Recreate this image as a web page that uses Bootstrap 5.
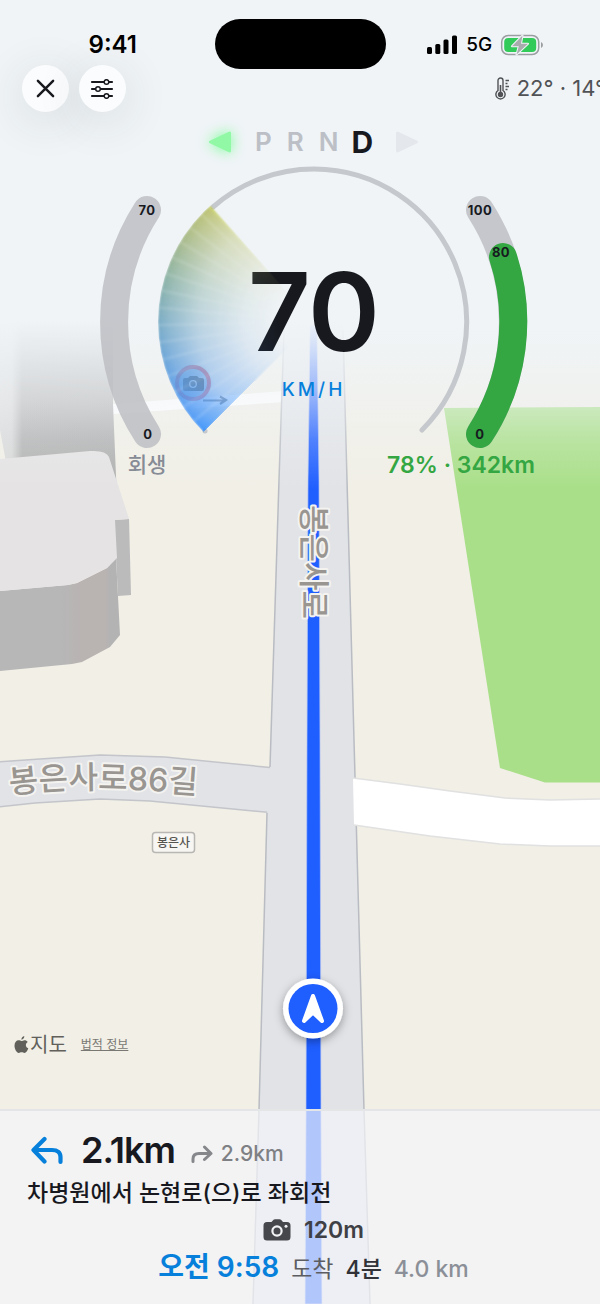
<!DOCTYPE html>
<html lang="ko">
<head>
<meta charset="utf-8">
<meta name="viewport" content="width=device-width, initial-scale=1">
<title>주행 내비게이션</title>
<link href="https://cdn.jsdelivr.net/npm/bootstrap@5.3.0/dist/css/bootstrap.min.css" rel="stylesheet">
<style>
  :root { --ink: #17191f; --accent: #0780dc; --charge: #34a642; }
  body { font-family: Inter, "Noto Sans CJK KR", sans-serif; color: var(--ink); background: #f1efe6; overflow-x: hidden; line-height: 1.2; }
  .screen { min-height: 100vh; overflow: hidden; isolation: isolate; }
  .map-layer { inset: 0; z-index: -1; width: 100%; height: 100%; }
  /* the driving overlay is a little wider than the window */
  .overlay { margin-right: -27px; }

  .status-bar { height: 65px; padding-top: 19px; color: #000; }
  .status-side { flex: 1 1 0; height: 52px; }
  .island { width: 171px; height: 50px; border-radius: 25px; background: #000; }
  .clock { font-size: 24px; font-weight: 600; margin-left: 11px; }
  .signal { margin-right: 14px; }
  .net { font-size: 19px; font-weight: 500; }

  .tools { padding: 0 22px; gap: 10px; }
  .tool-btn { width: 47px; height: 47px; border: 0; border-radius: 50%; background: #fbfcfd; color: var(--ink); box-shadow: 0 8px 44px 6px rgba(40, 50, 60, .09); }
  .tool-btn:hover { background: #fff; }
  .weather { font-size: 22px; font-weight: 400; color: #505256; gap: 7px; }

  .gears { height: 48px; padding-top: 12px; gap: 15px; font-size: 26px; font-weight: 600; color: #bcc0c6; line-height: 36px; }
  .gears .current { font-size: 30px; font-weight: 700; color: var(--ink); margin-left: -2px; }
  .blink-left { margin-right: 8px; filter: drop-shadow(0 0 7px #6fff8e); }
  .blink-right { margin-left: 7px; }

  .cluster { width: 460px; }
  .dial { display: grid; }
  .dial > * { grid-area: 1 / 1; }
  .dial svg text { font-weight: 700; font-size: 13px; letter-spacing: .5px; fill: var(--ink); text-anchor: middle; }
  .fan { width: 312px; height: 312px; margin-top: 6px; justify-self: center; border-radius: 50%; filter: blur(1px);
    background:
      repeating-conic-gradient(from 225deg, transparent 0deg 4.6deg, rgba(255,255,255,.14) 5.4deg 5.6deg, transparent 6.4deg),
      conic-gradient(from 225deg, #2186ff 0deg, #4090f4 10deg, #4f95dc 26deg, #659fbe 44deg, #7ba796 62deg, #9cb075 78deg, #b4ba5c 92deg, #c4cc50 93deg, transparent 94deg);
    -webkit-mask: conic-gradient(from 225deg, #000 93deg, transparent 94deg), radial-gradient(circle closest-side, transparent 22%, rgba(0,0,0,.12) 45%, rgba(0,0,0,.38) 74%, rgba(0,0,0,.7) 93%, rgba(0,0,0,.85) 100%);
    -webkit-mask-composite: source-in;
    mask-composite: intersect; }
  .readout { padding-top: 85px; }
  .speed { font-size: 109px; font-weight: 600; line-height: 132px; letter-spacing: -1px; }
  .unit { font-size: 19px; font-weight: 500; letter-spacing: 3px; color: var(--accent); line-height: 26px; }
  .gauge-foot { margin-top: -28px; line-height: 30px; }
  .regen { width: 127px; font-size: 21px; font-weight: 500; color: #868b95; }
  .range { width: 165px; font-size: 23px; font-weight: 600; color: var(--charge); }

  .attribution { padding: 0 14px 50px; color: #61605b; }
  .maps-name { font-size: 20px; line-height: 28px; margin-left: 1px; }
  .legal { font-size: 12px; color: #797873; margin-left: 14px; }

  .route-panel { background: rgba(244, 245, 249, .69); border-top: 2px solid #e3e5e6; padding: 17px 27px 15px; }
  .next-dist { font-size: 36px; font-weight: 600; line-height: 44px; letter-spacing: -1px; margin-left: 14px; }
  .then-dist { font-size: 21px; font-weight: 500; color: #7e8084; }
  .instruction { font-size: 23px; font-weight: 500; line-height: 34px; margin-top: 4px; white-space: nowrap; }
  .camera-row { font-size: 23px; font-weight: 600; color: #3e4045; line-height: 32px; gap: 13px; margin-top: 4px; }
  .eta-row { font-size: 23px; color: #5b5d62; line-height: 40px; gap: 12px; margin-top: 1px; }
  .eta { font-size: 28px; font-weight: 600; color: var(--accent); }
  .trip-time { color: #303238; }
  .trip-dist { color: #8b8f97; }
  .road-name { fill: #999590; stroke: #f4f3f0; stroke-width: 4px; stroke-linejoin: round; paint-order: stroke; font-weight: 500; }
</style>
</head>
<body>
<div class="screen position-relative d-flex flex-column">

  <svg class="map-layer position-absolute" viewBox="0 0 600 1304" preserveAspectRatio="xMinYMin slice" role="img" aria-label="지도">
    <defs>
      <linearGradient id="haze" gradientUnits="userSpaceOnUse" x1="0" y1="320" x2="0" y2="490">
        <stop offset="0" stop-color="#f0f4f7"/><stop offset=".18" stop-color="#f0f4f7" stop-opacity=".84"/>
        <stop offset=".47" stop-color="#f0f4f7" stop-opacity=".54"/><stop offset=".7" stop-color="#f0f4f7" stop-opacity=".24"/>
        <stop offset="1" stop-color="#f0f4f7" stop-opacity="0"/>
      </linearGradient>
      <linearGradient id="wall" x1="0" x2="1" y1="0" y2="0">
        <stop offset=".5" stop-color="#b7b7b8"/><stop offset=".68" stop-color="#b9b3b2"/><stop offset=".88" stop-color="#b9b3b2"/><stop offset=".92" stop-color="#b3b3b4"/>
      </linearGradient>
      <linearGradient id="tower" x1="0" x2="1" y1="0" y2="0">
        <stop offset="0" stop-color="#dadada"/><stop offset=".1" stop-color="#d8d8d8"/><stop offset=".19" stop-color="#b2b2b2"/><stop offset="1" stop-color="#afafaf"/>
      </linearGradient>
      <filter id="puckShadow" x="-50%" y="-50%" width="200%" height="200%"><feDropShadow dx="0" dy="3" stdDeviation="5" flood-opacity=".35"/></filter>
      <path id="sideStreet" d="M10 794 Q58 788 104 789 T210 795"/>
    </defs>
    <rect width="600" height="1304" fill="#f1efe6"/>
    <path d="M444 408 600 407V782.500H545L500 768Z" fill="#a9df88"/>
    <path d="M113 404 284 391V402L113 414Z" fill="#fff"/>
    <path d="M0 300H113V404L117 500H0Z" fill="url(#tower)"/>
    <path d="M0 430 6 462H0Z" fill="#f1efe6"/>
    <path d="M-3 762 40 759 100 755 165 757 275 768V813L150 801 100 799 35 803-3 807Z" fill="#e1e3e7" stroke="#c3c5ca" stroke-width="1.500"/>
    <path d="M285 300 283 360 279 480 270 767V790L267 814 259 1110 253 1304H370L364 1110 354 740 347 480 343 330V300Z" fill="#e1e3e7"/>
    <path d="M285 300 283 360 279 480 270 767M267 813 259 1110 253 1304M370 1304 364 1110 354 740 347 480 343 330" fill="none" stroke="#b9bcc2" stroke-width="1.500"/>
    <path d="M353 778 400 784 450 791 505 798 550 800 602 799V846L550 846 500 844 430 836 354 825Z" fill="#fff"/>
    <path d="M353 778 400 784 450 791 505 798 550 800 602 799M602 846 550 846 500 844 430 836 354 825" fill="none" stroke="#e0e1e0" stroke-width="1.500"/>
    <path d="M0 591 68 585 77 583 107 568 116 558 120 635 110 647 82 662 72 664 0 671Z" fill="url(#wall)"/>
    <path d="M114 520 129 519 131 595 118 596Z" fill="#bbbbbc"/>
    <path d="M0 459 90 451Q106 450 109 457L129 519 115 520 117 558 107 568 77 583 68 585 0 591Z" fill="#e5e3e4"/>
    <path d="M310 325H317L319 480 320 740 321 1110 322 1304H305L306 1110 307 740 308 480Z" fill="#1f5eff" stroke="#b6c6f2" stroke-width=".7"/>
    <rect width="600" height="490" fill="url(#haze)"/>

    <text class="road-name" font-size="31" text-anchor="middle" transform="translate(303 562) rotate(90)">봉은사로</text>
    <text class="road-name" font-size="32"><textPath href="#sideStreet">봉은사로86길</textPath></text>
    <rect x="152.500" y="832.500" width="42" height="20" rx="3" fill="#f7f6f3" stroke="#b8b7b3" stroke-width="1.500"/>
    <text x="173.500" y="847" font-size="12" font-weight="500" text-anchor="middle" fill="#55544f">봉은사</text>

    <g filter="url(#puckShadow)"><circle cx="313" cy="1008.500" r="30" fill="#fff"/></g>
    <circle cx="313" cy="1008.500" r="24.500" fill="#1f5eff"/>
    <path d="M313 996 322 1021 313 1012.500 304 1021Z" fill="#fff" stroke="#fff" stroke-width="4" stroke-linejoin="round"/>
  </svg>

  <header class="status-bar d-flex align-items-start">
    <div class="status-side d-flex justify-content-center align-items-center"><span class="clock">9:41</span></div>
    <div class="island flex-shrink-0"></div>
    <div class="status-side d-flex justify-content-center align-items-center">
      <svg class="me-2" width="31" height="20" viewBox="0 0 31 20" aria-hidden="true"><rect y="12" width="5" height="7" rx="1.500"/><rect x="8.300" y="9" width="5" height="10" rx="1.500"/><rect x="16.500" y="4.500" width="5" height="14.500" rx="1.500"/><rect x="25" y=".5" width="5" height="18.500" rx="1.500"/></svg>
      <span class="net">5G</span>
      <svg class="signal ms-2" width="44" height="22" viewBox="0 0 44 22" aria-hidden="true">
        <rect x="1.700" y="1.500" width="37" height="19" rx="6.500" fill="none" stroke="#9b9ea1" stroke-width="1.500"/>
        <rect x="4.200" y="4" width="32" height="14" rx="4" fill="#32cb59"/>
        <path d="M41 8v6q2-1 2-3t-2-3" fill="#9b9ea1"/>
        <path d="M22.500 1.500 12 12.200h6.800L16.500 20.500 28 9.800h-7z" fill="#a9acad" stroke="#f0f4f8" stroke-width="2" paint-order="stroke" stroke-linejoin="round"/>
      </svg>
    </div>
  </header>

  <div class="overlay d-flex flex-column flex-grow-1">
    <nav class="tools d-flex align-items-center" aria-label="도구">
      <button type="button" class="tool-btn d-flex align-items-center justify-content-center p-0" aria-label="닫기">
        <svg width="19" height="19" viewBox="0 0 20 20" stroke="currentColor" stroke-width="2.600" stroke-linecap="round"><path d="M2 2 18 18M18 2 2 18"/></svg>
      </button>
      <button type="button" class="tool-btn d-flex align-items-center justify-content-center p-0" aria-label="설정">
        <svg width="25" height="20" viewBox="0 0 25 20" fill="#fbfcfd" stroke="currentColor" stroke-linecap="round"><path stroke-width="2.200" d="M2 3H22M2 10H22M2 17H22"/><g stroke-width="1.500"><circle cx="16.500" cy="3" r="2.300"/><circle cx="8" cy="10" r="2.300"/><circle cx="16.500" cy="17" r="2.300"/></g></svg>
      </button>
      <div class="weather d-flex align-items-center ms-auto">
        <svg width="15" height="23" viewBox="0 0 15 23" fill="none" stroke="currentColor" stroke-width="1.400"><path d="M3 13.500V3.500a2.500 2.500 0 0 1 5 0V13.500a4.600 4.600 0 1 1-5 0Z"/><circle cx="5.500" cy="17.500" r="2" fill="currentColor"/><path stroke-width="1.600" d="M5.500 8V17"/><path d="M10.500 3.500H14M10.500 6.500H12.500M10.500 9.500H14M10.500 12.500H12.500"/></svg>
        <span>22° · 14°</span>
      </div>
    </nav>

    <div class="gears d-flex justify-content-center align-items-center">
      <svg class="blink-left" width="24" height="24" viewBox="0 0 24 24" aria-label="좌측 방향지시등"><path d="M2.500 12 21.500 3V21Z" fill="#91f9a6" stroke="#91f9a6" stroke-width="3" stroke-linejoin="round"/></svg>
      <span>P</span><span>R</span><span>N</span><span class="current">D</span>
      <svg class="blink-right" width="24" height="24" viewBox="0 0 24 24" aria-label="우측 방향지시등"><path d="M21.500 12 2.500 3V21Z" fill="#e4e7ec" stroke="#e4e7ec" stroke-width="3" stroke-linejoin="round"/></svg>
    </div>

    <section class="cluster mx-auto" aria-label="계기판">
      <div class="dial">
        <svg class="w-100" viewBox="84 160 460 300" aria-hidden="true">
          <g fill="none" stroke-linecap="round">
            <path d="M213 207A153 153 0 0 1 314 169A153 153 0 0 1 422 430M205 431h.1" stroke="#c5c8cc" stroke-width="5"/>
            <g stroke="#babcc0" stroke-opacity=".8" stroke-width="28">
              <path d="M147 210A207 207 0 0 0 147 434"/>
              <path d="M480 210A207 207 0 0 1 480 434"/>
            </g>
            <path d="M503 257A207 207 0 0 1 480 434" stroke="#34a642" stroke-width="28"/>
          </g>
          <g opacity=".5">
            <circle cx="193" cy="383" r="19" fill="#dbe2ea" opacity=".6"/>
            <circle cx="193" cy="383" r="16" fill="#a9c9ec" stroke="#e0465f" stroke-width="4"/>
            <path d="M185 378h3l2-2h7l2 2h3a2 2 0 0 1 2 2v9a2 2 0 0 1-2 2h-17a2 2 0 0 1-2-2v-9a2 2 0 0 1 2-2Z" fill="#27303c"/>
            <circle cx="193" cy="384" r="3.300" fill="none" stroke="#dce6f0" stroke-width="1.300"/>
            <path d="M203 400.500H225M220 396.500 226 400 220 404" fill="none" stroke="#5a6472" stroke-width="2.200"/>
          </g>
        </svg>
        <div class="fan"></div>
        <svg class="w-100" viewBox="84 160 460 300">
          <text x="147" y="215">70</text><text x="148" y="439">0</text>
          <text x="480" y="215">100</text><text x="501" y="257">80</text><text x="480" y="439">0</text>
        </svg>
        <div class="readout text-center">
          <div class="speed">70</div>
          <div class="unit">KM/H</div>
        </div>
      </div>
      <div class="gauge-foot d-flex justify-content-between text-center">
        <span class="regen">회생</span>
        <span class="range text-nowrap">78% · 342km</span>
      </div>
    </section>

    <div class="attribution d-flex align-items-center mt-auto">
      <svg width="15" height="18" viewBox="0 0 14 18" fill="currentColor" aria-label="Apple"><path d="M9.800 0C10 1.800 8.600 3.600 6.900 3.700 6.700 2 8.200.3 9.800 0ZM7 5C7.800 5 8.600 4.200 10 4.200c1.300 0 2.500.7 3.200 1.700-2.700 1.600-2.300 5.300.6 6.400C13 14.500 11.600 17 10 17c-1.100 0-1.600-.7-2.900-.7-1.300 0-1.800.7-2.900.7C2.300 17 0 13.200 0 9.800 0 6.200 2 4.300 4 4.300 5.300 4.300 6.300 5 7 5Z"/></svg>
      <span class="maps-name">지도</span>
      <a class="legal" href="#legal">법적 정보</a>
    </div>

    <footer class="route-panel">
      <div class="d-flex align-items-center">
        <svg class="mx-1" width="32" height="30" viewBox="0 0 32 30" fill="none" stroke="#0780dc" stroke-width="4.200" stroke-linecap="round" stroke-linejoin="round"><path d="M13.500 4 2.500 15 13.500 26.500M3 15H21Q29.500 15 29.500 22V27"/></svg>
        <span class="next-dist">2.1km</span>
        <svg class="ms-3 mt-2" width="22" height="20" viewBox="0 0 22 20" fill="none" stroke="#85878b" stroke-width="3" stroke-linecap="round" stroke-linejoin="round"><path d="M13.500 3 20 9.500 13.500 15.500M19.500 9.500H8Q2 9.500 2 15V17.500"/></svg>
        <span class="then-dist ms-2 mt-2">2.9km</span>
      </div>
      <div class="instruction">차병원에서 논현로(으)로 좌회전</div>
      <div class="camera-row d-flex justify-content-center align-items-center">
        <svg width="28" height="22" viewBox="0 0 28 22" aria-label="단속 카메라"><path d="M4 3h4.500L10.500.8Q11 .3 12 .3h4.500q1 0 1.500.5L20 3h4a3.500 3.500 0 0 1 3.500 3.500v11.500A3.500 3.500 0 0 1 24 21.500H4A3.500 3.500 0 0 1 .5 18V6.500A3.500 3.500 0 0 1 4 3Z" fill="#45474c"/><circle cx="14" cy="12" r="4.600" fill="none" stroke="#f1f2f4" stroke-width="2.200"/><circle cx="23" cy="7.300" r="1.500" fill="#f1f2f4"/></svg>
        <span>120m</span>
      </div>
      <div class="eta-row d-flex justify-content-center align-items-baseline">
        <span class="eta">오전 9:58</span>
        <span>도착</span>
        <span class="trip-time fw-medium">4분</span>
        <span class="trip-dist fw-medium">4.0 km</span>
      </div>
    </footer>
  </div>
</div>
<script src="https://cdn.jsdelivr.net/npm/bootstrap@5.3.0/dist/js/bootstrap.bundle.min.js"></script>
</body>
</html>
